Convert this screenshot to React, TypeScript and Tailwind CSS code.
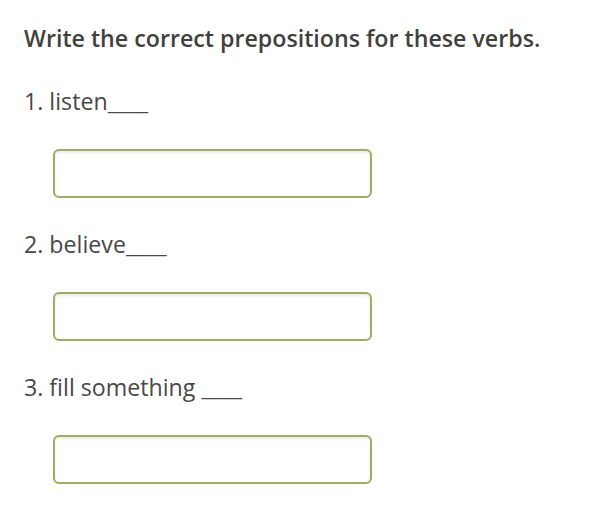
import React from "react";

const items = ["1. listen____", "2. believe____", "3. fill something ____"];

export default function App() {
  return (
    <div
      className="min-h-[505px] w-[614px] bg-white pl-[24px] pt-[23px] text-[#464646]"
      style={{ fontFamily: '"Open Sans", "Noto Sans", sans-serif' }}
    >
      <h1 className="text-[23.2px] font-semibold leading-[30px] text-[#3f413b]">
        Write the correct prepositions for these verbs.
      </h1>
      <div className="flex flex-col">
        {items.map((t, i) => (
          <div key={i} className={i === 0 ? "mt-[33px]" : "mt-[31px]"}>
            <p className="text-[23.2px] leading-[31px] font-normal text-[#484848]">{t}</p>
            <input
              type="text"
              aria-label={t}
              className="mt-[32px] ml-[29px] block h-[49px] w-[319px] rounded-[6px] border-2 border-[#9cae62] bg-white shadow-[inset_0_2px_3px_rgba(0,0,0,0.08)] outline-none"
            />
          </div>
        ))}
      </div>
    </div>
  );
}
